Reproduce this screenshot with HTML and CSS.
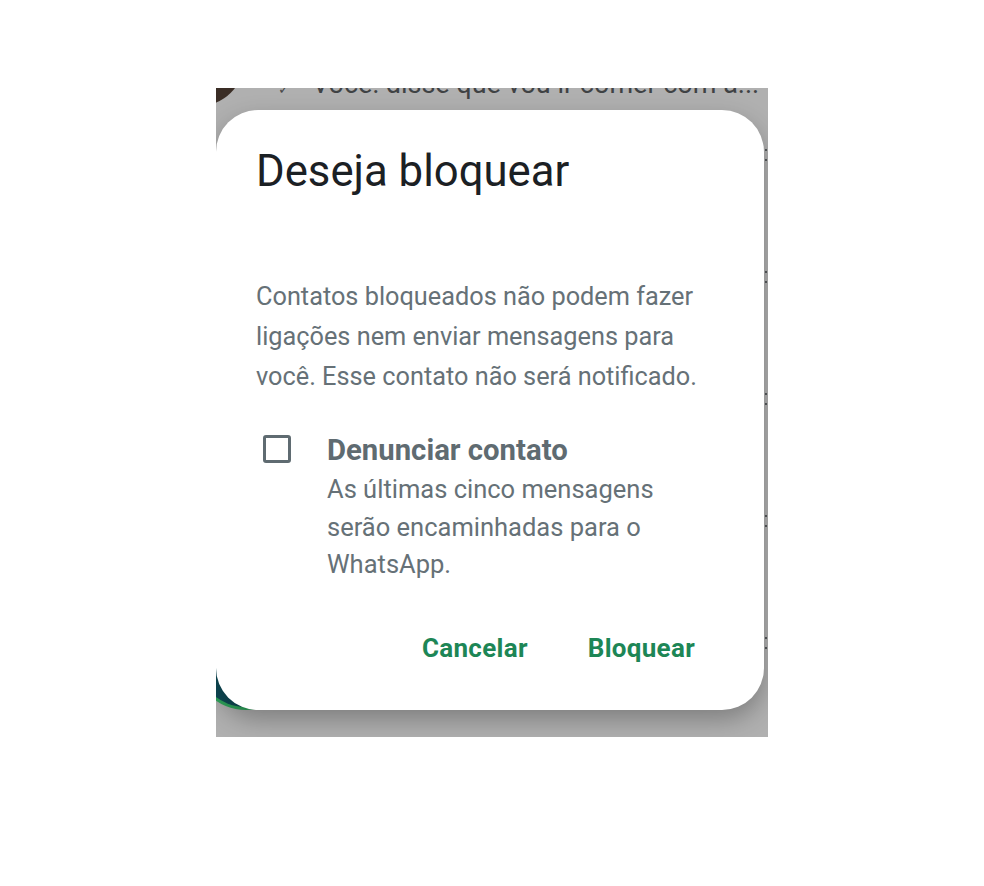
FILE: index.html
```html
<!DOCTYPE html>
<html lang="pt-BR">
<head>
    <meta charset="UTF-8">
    <meta name="viewport" content="width=device-width, initial-scale=1.0">
    <title>Bloquear contato</title>
    <link rel="stylesheet" href="styles.css">
</head>
<body>
    <div class="tela">
        <!-- lista de conversas atrás do diálogo -->
        <div class="conversas">
            <div class="conversa conversa-topo">
                <div class="avatar avatar-marrom"></div>
                <span class="visto">✓</span>
                <span class="previa">Você: disse que vou ir comer com a...</span>
            </div>
            <div class="conversa"><span class="marcas"><i></i><i></i></span></div>
            <div class="conversa"><span class="marcas"><i></i><i></i></span></div>
            <div class="conversa"><span class="marcas"><i></i><i></i></span></div>
            <div class="conversa"><span class="marcas"><i></i><i></i></span></div>
            <div class="conversa conversa-fim">
                <div class="avatar avatar-verde"></div>
                <span class="marcas"><i></i><i></i></span>
            </div>
        </div>

        <div class="dialogo">
            <h1 class="titulo">Deseja bloquear</h1>
            <p class="texto">Contatos bloqueados não podem fazer ligações nem enviar mensagens para você. Esse contato não será notificado.</p>

            <label class="opcao">
                <span class="caixa"></span>
                <span class="opcao-texto">
                    <strong>Denunciar contato</strong>
                    <span>As últimas cinco mensagens serão encaminhadas para o WhatsApp.</span>
                </span>
            </label>

            <div class="acoes">
                <button class="botao">Cancelar</button>
                <button class="botao">Bloquear</button>
            </div>
        </div>
    </div>
</body>
</html>
```

FILE: styles.css
```css
body {
    margin: 0;
    background-color: #ffffff;
    font-family: 'Roboto', 'Noto Sans', sans-serif;
}

.tela {
    position: relative;
    width: 552px;
    height: 649px;
    margin: 88px 0 0 216px;
    background-color: #b0b0b0;
    overflow: hidden;
}

/* conversas escurecidas pelo fundo */
.conversas {
    display: flex;
    flex-direction: column;
}

.conversa {
    position: relative;
    display: flex;
    align-items: flex-start;
    justify-content: flex-end;
    height: 122px;
}

.conversa-topo {
    height: 47px;
    margin-top: -28px;
    justify-content: flex-start;
    align-items: center;
}

.previa {
    font-size: 27px;
    color: #3f4244;
    white-space: nowrap;
    margin-left: 22px;
}

.visto {
    font-size: 14px;
    color: #4a4a4a;
    margin-left: 62px;
    margin-top: 10px;
}

.avatar {
    position: absolute;
    border-radius: 50%;
}

.avatar-marrom {
    left: -62px;
    top: -44px;
    width: 90px;
    height: 90px;
    background-color: #3a2d25;
}

.avatar-verde {
    left: -20px;
    top: 12px;
    width: 100px;
    height: 100px;
    background-color: #0f4b57;
    box-shadow: 0 0 0 3px #2fa65c;
}

.marcas {
    display: flex;
    flex-direction: column;
    gap: 8px;
    margin: 42px 1px 0 0;
}

.marcas i {
    display: block;
    width: 2px;
    height: 2px;
    background-color: #55595b;
}

/* diálogo */
.dialogo {
    position: absolute;
    top: 22px;
    left: 0;
    width: 548px;
    height: 600px;
    box-sizing: border-box;
    padding: 36px 56px 0 40px;
    background-color: #ffffff;
    border-radius: 42px;
    box-shadow: 0 10px 24px rgba(0, 0, 0, 0.28);
    display: flex;
    flex-direction: column;
}

.titulo {
    margin: 0;
    font-size: 43.7px;
    line-height: 50px;
    font-weight: 400;
    color: #1b2024;
}

.texto {
    margin: 81px 0 0 0;
    font-size: 25.3px;
    line-height: 40px;
    color: #667177;
}

.opcao {
    display: flex;
    gap: 36px;
    margin-top: 35px;
}

.caixa {
    flex: none;
    width: 22px;
    height: 22px;
    margin: 3px 0 0 7px;
    border: 3px solid #5f6b71;
    border-radius: 3px;
}

.opcao-texto {
    display: flex;
    flex-direction: column;
    padding-right: 40px;
}

.opcao-texto strong {
    font-size: 29.3px;
    line-height: 36px;
    font-weight: 700;
    color: #5f6b71;
}

.opcao-texto span {
    margin-top: 3px;
    font-size: 25.5px;
    line-height: 37.5px;
    color: #667177;
}

.acoes {
    display: flex;
    justify-content: flex-end;
    gap: 60px;
    margin: 44px 13px 0 0;
}

.botao {
    padding: 0;
    border: none;
    background: none;
    font-family: inherit;
    font-size: 26px;
    line-height: 40px;
    font-weight: 700;
    letter-spacing: 0.3px;
    color: #1d8656;
    cursor: pointer;
}
```
